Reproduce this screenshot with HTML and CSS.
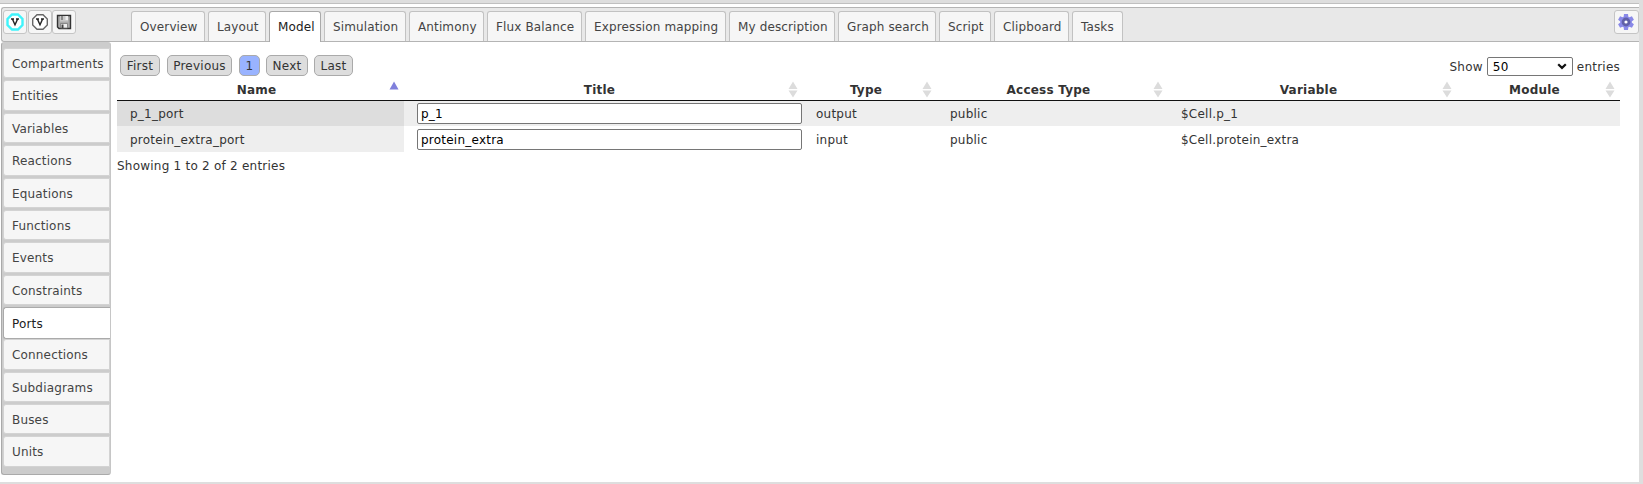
FILE: index.html
```html
<!DOCTYPE html>
<html lang="en">
<head>
<meta charset="utf-8">
<title>Model - Ports</title>
<link rel="stylesheet" href="styles.css">
</head>
<body>
<div class="pane">
  <header class="topbar">
    <div class="tools">
      <button class="tool"><svg width="18" height="18" viewBox="0 0 18 18"><path d="M6 1.5h6L16.5 6v6L12 16.5H6L1.5 12V6z" fill="#fff" stroke="#3ff4fb" stroke-width="2.4"/><path d="M5 6h3M10 6h3M6.6 6.5L9 11.8l2.4-5.3" fill="none" stroke="#222" stroke-width="1.4"/></svg></button>
      <button class="tool"><svg width="18" height="18" viewBox="0 0 18 18"><path d="M6 1.7h6L16.3 6v6L12 16.3H6L1.7 12V6z" fill="#fff" stroke="#666" stroke-width="1.4"/><path d="M5 6h3M10 6h3M6.6 6.5L9 11.8l2.4-5.3" fill="none" stroke="#222" stroke-width="1.4"/></svg></button>
      <button class="tool"><svg width="16" height="18" viewBox="0 0 16 18"><path d="M1.5 2.5h13v13H3L1.5 14z" fill="#aaa" stroke="#333" stroke-width="1.4"/><path d="M4 3h8v5.5H4z" fill="#c8c8c8"/><path d="M5 3h2v4H5z" fill="#888"/><path d="M9.5 3H12v4H9.5z" fill="#eee"/><path d="M4.5 10.5h7V15h-7z" fill="#eee" stroke="#777" stroke-width=".8"/><path d="M5.5 11.5h2V15h-2z" fill="#444"/></svg></button>
    </div>
    <nav class="tabs">
      <a class="tab">Overview</a><a class="tab">Layout</a><a class="tab active">Model</a><a class="tab">Simulation</a><a class="tab">Antimony</a><a class="tab">Flux Balance</a><a class="tab">Expression mapping</a><a class="tab">My description</a><a class="tab">Graph search</a><a class="tab">Script</a><a class="tab">Clipboard</a><a class="tab">Tasks</a>
    </nav>
    <button class="tool settings"><svg width="17" height="18" viewBox="0 0 17 18"><g fill="#8989e8"><circle cx="8" cy="9" r="5.8"/><path d="M6 1h4l.5 4h-5zM6 17h4l.5-4h-5z"/><path d="M6 1h4l.5 4h-5zM6 17h4l.5-4h-5z" transform="rotate(60 8 9)"/><path d="M6 1h4l.5 4h-5zM6 17h4l.5-4h-5z" transform="rotate(120 8 9)"/></g><circle cx="8" cy="9" r="3" fill="#fff" stroke="#6060a8" stroke-width="2.8"/></svg></button>
  </header>
  <div class="body">
    <aside class="side">
      <a class="item">Compartments</a><a class="item">Entities</a><a class="item">Variables</a><a class="item">Reactions</a><a class="item">Equations</a><a class="item">Functions</a><a class="item">Events</a><a class="item">Constraints</a><a class="item active">Ports</a><a class="item">Connections</a><a class="item">Subdiagrams</a><a class="item">Buses</a><a class="item">Units</a>
    </aside>
    <main class="content">
      <div class="controls">
        <div class="pager"><a class="page first">First</a><a class="page previous">Previous</a><a class="page current">1</a><a class="page next">Next</a><a class="page last">Last</a></div>
        <label class="length">Show <span class="select">50<svg width="10" height="7" viewBox="0 0 10 7"><path d="M1.2 1.2L5 4.9l3.8-3.7" fill="none" stroke="#111" stroke-width="2.2"/></svg></span> entries</label>
      </div>
      <table class="grid">
        <colgroup><col class="c-name"><col class="c-title"><col class="c-type"><col class="c-access"><col class="c-variable"><col class="c-module"></colgroup>
        <thead><tr>
          <th>Name<svg class="sort" width="10" height="17" viewBox="0 0 10 17"><path d="M5 .5L9.5 8.5h-9z" fill="#8080dc"/></svg></th>
          <th>Title<svg class="sort" width="10" height="17" viewBox="0 0 10 17"><path d="M5 .5L9.5 8h-9zM5 16.5L.5 9.5h9z" fill="#dcdcdc"/></svg></th>
          <th>Type<svg class="sort" width="10" height="17" viewBox="0 0 10 17"><path d="M5 .5L9.5 8h-9zM5 16.5L.5 9.5h9z" fill="#dcdcdc"/></svg></th>
          <th>Access Type<svg class="sort" width="10" height="17" viewBox="0 0 10 17"><path d="M5 .5L9.5 8h-9zM5 16.5L.5 9.5h9z" fill="#dcdcdc"/></svg></th>
          <th>Variable<svg class="sort" width="10" height="17" viewBox="0 0 10 17"><path d="M5 .5L9.5 8h-9zM5 16.5L.5 9.5h9z" fill="#dcdcdc"/></svg></th>
          <th>Module<svg class="sort" width="10" height="17" viewBox="0 0 10 17"><path d="M5 .5L9.5 8h-9zM5 16.5L.5 9.5h9z" fill="#dcdcdc"/></svg></th>
        </tr></thead>
        <tbody>
          <tr class="odd"><td>p_1_port</td><td><input class="field" value="p_1"></td><td>output</td><td>public</td><td>$Cell.p_1</td><td></td></tr>
          <tr class="even"><td>protein_extra_port</td><td><input class="field" value="protein_extra"></td><td>input</td><td>public</td><td>$Cell.protein_extra</td><td></td></tr>
        </tbody>
      </table>
      <div class="info">Showing 1 to 2 of 2 entries</div>
    </main>
  </div>
</div>
</body>
</html>
```
FILE: styles.css
```css
* { box-sizing: border-box; }
body {
  margin: 0;
  height: 484px;
  overflow: hidden;
  background: #dedede;
  color: #333;
  font: 12px/16px Verdana, "DejaVu Sans", sans-serif;
  letter-spacing: 0.23px;
  padding: 3px 4px 2px 0;
}
.pane {
  height: 479px;
  border-top: 1px solid #c0c0c0;
  background: #fff;
  padding: 3px 0 0 1px;
}
.topbar {
  display: flex;
  height: 35px;
  border: 1px solid #b4b4b4;
  border-right: 0;
  border-radius: 3px 0 0 3px;
  background: #e8e8e8;
}
.tools { display: flex; gap: 1px; width: 129px; padding: 2px 0 0 1px; }
.tool {
  display: flex;
  align-items: center;
  justify-content: center;
  width: 24px;
  height: 24px;
  padding: 0;
  border: 1px solid #c5c5c5;
  border-radius: 3px;
  background: #f6f6f6;
}
.tools .tool:last-child { margin-left: -1px; }
.settings { margin: 2px 0 0 auto; width: 25px; }
.tabs { display: flex; gap: 3px; padding-top: 3px; letter-spacing: 0.13px; }
.tab {
  height: 30px;
  padding: 7px 0 0 8px;
  border: 1px solid #c2c2c2;
  border-bottom: 0;
  border-radius: 3px 3px 0 0;
  background: #f6f6f6;
  color: #444;
  white-space: nowrap;
}
.tab.active { height: 31px; border-color: #aaa; background: #fff; color: #212121; }
.tab:nth-child(1) { width: 74px; }
.tab:nth-child(2) { width: 58px; }
.tab:nth-child(3) { width: 52px; }
.tab:nth-child(4) { width: 82px; }
.tab:nth-child(5) { width: 75px; }
.tab:nth-child(6) { width: 95px; }
.tab:nth-child(7) { width: 141px; }
.tab:nth-child(8) { width: 106px; }
.tab:nth-child(9) { width: 98px; }
.tab:nth-child(10) { width: 52px; }
.tab:nth-child(11) { width: 75px; }
.tab:nth-child(12) { width: 51px; }
.body { display: flex; align-items: flex-start; }
.side {
  width: 110px;
  height: 433px;
  padding: 5px 0 0 1px;
  border: 1px solid #aaa;
  border-top-color: #ccc;
  border-right-color: #c6c6c6;
  border-radius: 3px;
  background: #ccc;
  letter-spacing: 0.17px;
}
.item {
  display: block;
  height: 30.4px;
  margin-bottom: 2px;
  padding: 7px 0 0 8px;
  border: 1px solid #d3d3d3;
  border-radius: 3px 0 0 3px;
  background: #f6f6f6;
  color: #444;
}
.item.active {
  height: 32px;
  margin-bottom: 0;
  padding-top: 8px;
  border-color: #aaa;
  border-right: 0;
  background: #fff;
  color: #212121;
}
.content { width: 1503px; margin-left: 6px; padding-top: 13px; }
.controls { display: flex; justify-content: space-between; height: 25px; padding-left: 3px; }
.pager { display: flex; }
.page {
  height: 21px;
  padding-top: 2px;
  border: 1px solid #aaa;
  border-radius: 5px;
  background: #ddd;
  text-align: center;
}
.first { width: 40px; margin-right: 7px; }
.previous { width: 65px; margin-right: 7px; }
.current { width: 21px; margin-right: 6px; background: #99b3ff; }
.next { width: 42px; margin-right: 6px; }
.last { width: 39px; }
.length { display: flex; align-items: center; gap: 4px; height: 19px; margin-top: 2px; }
.select {
  display: flex;
  align-items: center;
  justify-content: space-between;
  width: 86px;
  height: 19px;
  padding: 0 5px;
  border: 1px solid #767676;
  border-radius: 2px;
  background: #fff;
  color: #000;
}
.grid { width: 1503px; table-layout: fixed; border-collapse: separate; border-spacing: 0; }
.c-name { width: 287px; }
.c-title { width: 399px; }
.c-type { width: 134px; }
.c-access { width: 231px; }
.c-variable { width: 289px; }
.c-module { width: 163px; }
.grid th {
  position: relative;
  height: 21px;
  padding: 0 18px 0 10px;
  border-bottom: 1px solid #111;
  font-weight: bold;
  line-height: 18px;
}
.sort { position: absolute; right: 5.5px; top: 1px; }
.grid td { height: 25px; padding: 0 0 0 13px; }
.grid .even td { height: 26px; padding-top: 1px; }
.odd td { background: #eee; }
.odd td:first-child { background: #ddd; }
.even td:first-child { background: #eee; }
.field {
  display: block;
  width: 385px;
  height: 21px;
  margin: 0;
  padding: 0 3px;
  border: 1px solid #767676;
  border-radius: 2px;
  background: #fff;
  color: #000;
  font: inherit;
  letter-spacing: inherit;
}
.info { padding-top: 6px; }
```
